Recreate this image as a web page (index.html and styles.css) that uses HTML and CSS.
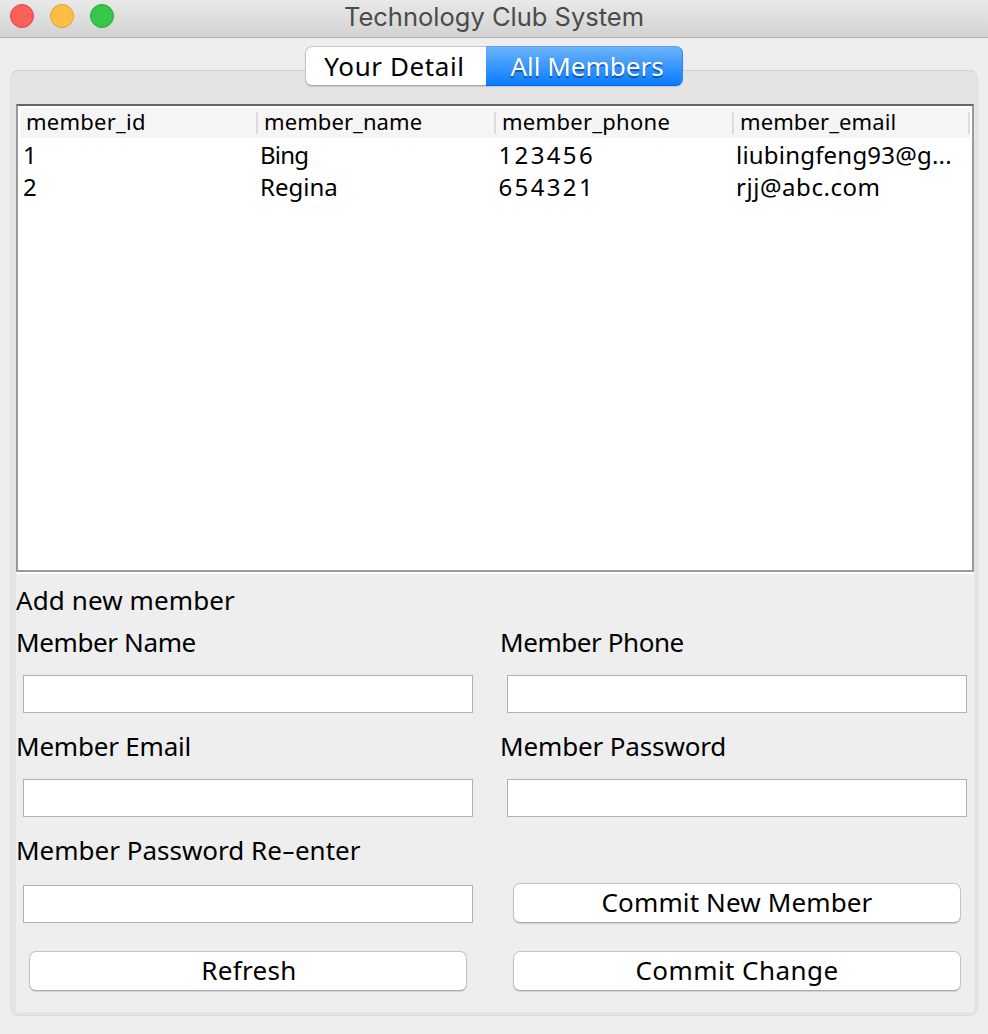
FILE: index.html
```html
<!DOCTYPE html>
<html lang="en">
<head>
<meta charset="utf-8">
<title>Technology Club System</title>
<link rel="stylesheet" href="styles.css">
</head>
<body>
<header class="titlebar">
  <div class="lights">
    <span class="light close"></span><span class="light minimize"></span><span class="light zoom"></span>
  </div>
  <h1 class="title">Technology Club System</h1>
</header>
<main class="window">
  <nav class="tabs">
    <button class="tab t-detail">Your Detail</button>
    <button class="tab active">All Members</button>
  </nav>
  <section class="pane">
    <div class="content">
      <div class="table">
        <div class="row head">
          <span class="th h-id">member_id</span>
          <span class="th h-name">member_name</span>
          <span class="th h-phone">member_phone</span>
          <span class="th h-email">member_email</span>
        </div>
        <div class="row">
          <span class="td id">1</span><span class="td bing">Bing</span><span class="td digits">123456</span><span class="td liu">liubingfeng93@g...</span>
        </div>
        <div class="row">
          <span class="td id">2</span><span class="td regina">Regina</span><span class="td digits">654321</span><span class="td rjj">rjj@abc.com</span>
        </div>
      </div>
      <form class="form">
        <h2 class="heading">Add new member</h2>
        <label class="field"><span class="label l-name">Member Name</span><input class="input" type="text"></label>
        <label class="field"><span class="label l-phone">Member Phone</span><input class="input" type="text"></label>
        <label class="field"><span class="label l-email">Member Email</span><input class="input" type="text"></label>
        <label class="field"><span class="label l-pass">Member Password</span><input class="input" type="password"></label>
        <label class="field last"><span class="label l-again">Member Password Re<span class="dash">-</span>enter</span><input class="input" type="password"></label>
        <div class="action"><button class="button b-new" type="button">Commit New Member</button></div>
        <div class="action bottom"><button class="button b-refresh" type="button">Refresh</button></div>
        <div class="action bottom"><button class="button b-change" type="button">Commit Change</button></div>
      </form>
    </div>
  </section>
</main>
</body>
</html>
```
FILE: styles.css
```css
* { box-sizing: border-box; }

body {
  margin: 0;
  height: 1034px;
  overflow: hidden;
  background: #eeeeee;
  color: #000;
  font: 26px "Noto Sans", sans-serif;
}

button { font: inherit; color: inherit; }

/* Title bar */
.titlebar {
  display: grid;
  grid-template-columns: 1fr auto 1fr;
  height: 38px;
  background: linear-gradient(#e9e9e9, #d2d2d2);
  border-bottom: 1px solid #b0b0b0;
}
.lights { display: flex; gap: 16px; padding: 4px 0 0 10px; }
.light { width: 24px; height: 24px; border-radius: 50%; border: 1px solid; }
.close { background: #fc605c; border-color: #e04644; }
.minimize { background: #fdbe41; border-color: #dfa038; }
.zoom { background: #34c84a; border-color: #27ab38; }
.title {
  margin: 0;
  font: 400 25.5px/33px Inter, sans-serif;
  color: #4b4b4b;
}

/* Tabs straddle the top edge of the pane */
.window { padding: 8px 10px 0; }
.tabs {
  display: flex;
  width: 378px;
  height: 40px;
  margin: 0 auto -16px 295px;
  position: relative;
  z-index: 1;
}
.tab {
  width: 181px;
  padding: 0 0 1px 0;
  border: 1px solid #c4c4c4;
  border-bottom-color: #aaa;
  border-right: 0;
  border-radius: 7px 0 0 7px;
  background: #fff;
  line-height: 36px;
  white-space: nowrap;
  box-shadow: 0 1px 1px rgba(0, 0, 0, 0.12);
}
.t-detail { letter-spacing: 0.6px; padding-right: 3px; }
.tab.active {
  width: 197px;
  padding-left: 6px;
  border: 1px solid;
  border-color: #5aa5f5 #2f83f5 #0a62f0 #5aa5f5;
  border-left: 0;
  border-radius: 0 7px 7px 0;
  background: linear-gradient(#6cb3fa, #087cff);
  color: #fff;
  text-shadow: 0 2px 1px rgba(0, 40, 110, 0.55);
}

/* Pane */
.pane {
  height: 946px;
  padding: 33px 3px 3px 5px;
  background: #e4e4e4;
  border: 1px solid #dddddd;
  border-top-color: #d2d2d2;
  border-radius: 8px;
}
.content { height: 908px; background: #eeeeee; }

/* Table */
.table {
  height: 468px;
  padding: 2px 2px 0;
  background: #fff;
  border: 2px solid #999;
  border-top-color: #666;
}
.row {
  display: grid;
  grid-template-columns: 238px 238px 238px 1fr;
  line-height: 32px;
  font-size: 24px;
}
.head { height: 30px; margin-bottom: 1px; background: #f5f5f5; line-height: 27px; font-size: 22px; }
.th {
  padding-left: 6px;
  background: linear-gradient(#dcdcdc, #dcdcdc) right 4px / 2px 22px no-repeat;
}
.td { padding-left: 2px; white-space: nowrap; }
.td.id { padding-left: 3px; }
.h-id { letter-spacing: 0.25px; }
.h-name { letter-spacing: 0.08px; }
.h-phone { letter-spacing: 0.28px; }
.h-email { letter-spacing: 0.1px; }
.bing { letter-spacing: -0.8px; }
.regina { letter-spacing: 0; }
.digits { letter-spacing: 2.35px; }
.td.digits { padding-left: 2.5px; }
.liu { letter-spacing: 0.2px; }
.rjj { letter-spacing: 0.55px; }

/* Form */
.form {
  display: grid;
  grid-template-columns: 484px 474px;
  border-top: 2px solid #fff;
}
.heading {
  grid-column: 1 / -1;
  margin: 0;
  font: inherit;
  line-height: 52px;
  letter-spacing: 0.1px;
}
.field { display: flex; flex-direction: column; height: 104px; }
.label { line-height: 32px; white-space: nowrap; }
.l-name { letter-spacing: -0.38px; }
.l-phone { letter-spacing: -0.43px; }
.l-email { letter-spacing: -0.2px; }
.l-pass { letter-spacing: -0.14px; }
.l-again { letter-spacing: 0; }
.dash { display: inline-block; width: 13px; text-align: center; transform: scaleX(1.6); }
.input {
  width: 450px;
  height: 38px;
  margin: 17px 0 0 7px;
  padding: 0 6px;
  border: 1px solid #b2b2b2;
  border-radius: 0;
  background: #fff;
  font: inherit;
  outline: 0;
}
.field:nth-of-type(even) .input { width: 460px; }
.field.last { height: 89px; }
.field.last .input { margin-top: 19px; }

.action { display: flex; align-items: flex-end; height: 89px; padding: 0 13px 0 13px; }
.action.bottom { height: 68px; }
.button {
  flex: 1;
  height: 40px;
  padding: 0 0 2px;
  border: 1px solid #c4c4c4;
  border-bottom-color: #aaa;
  border-radius: 7px;
  background: #fff;
  line-height: 36px;
  box-shadow: 0 1px 1px rgba(0, 0, 0, 0.12);
}
.b-new { letter-spacing: 0.13px; }
.b-refresh { margin-right: 20px; padding-left: 2px; letter-spacing: 0.3px; }
.b-change { letter-spacing: 0.43px; }
```
